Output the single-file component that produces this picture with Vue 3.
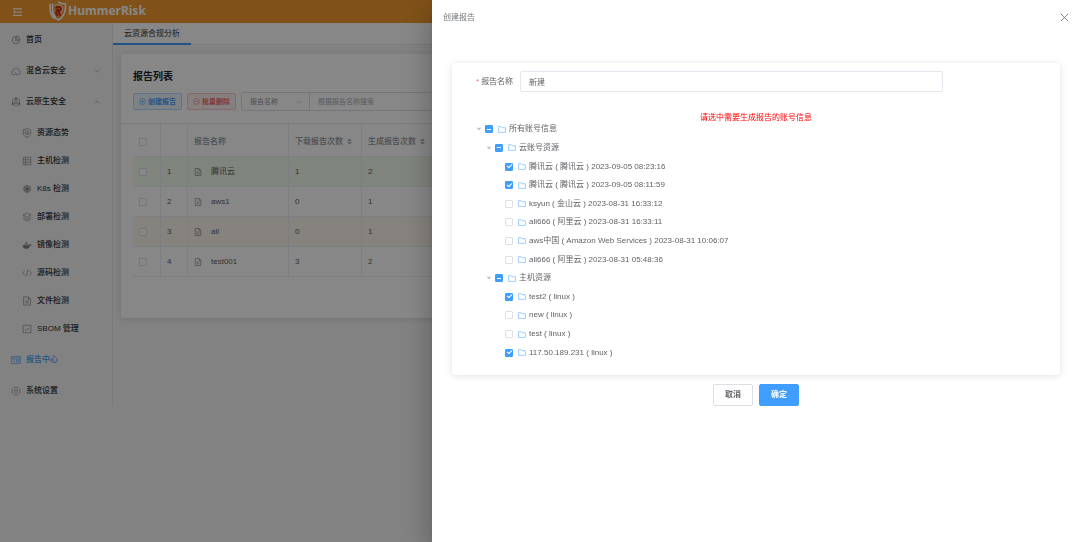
<script setup>
import { ref } from 'vue'

const mainMenu = [
  { icon: 'pie', label: '首页' },
  { icon: 'cloud', label: '混合云安全', arrow: 'down' },
  {
    icon: 'native', label: '云原生安全', arrow: 'up',
    children: [
      { icon: 'shield', label: '资源态势' },
      { icon: 'host', label: '主机检测' },
      { icon: 'k8s', label: 'K8s 检测' },
      { icon: 'layers', label: '部署检测' },
      { icon: 'docker', label: '镜像检测' },
      { icon: 'code', label: '源码检测' },
      { icon: 'file', label: '文件检测' },
      { icon: 'sbom', label: 'SBOM 管理' },
    ],
  },
  { icon: 'report', label: '报告中心', active: true },
  { icon: 'gear', label: '系统设置' },
]

const icons = {
  pie: '<path d="M7 2.2A6 6 0 1 0 13.800 9H7z"/><path d="M9 1.500V7h5.500A6 6 0 0 0 9 1.500z"/>',
  cloud: '<path d="M4 13.500a3.300 3.300 0 0 1-.5-6.500 4.700 4.700 0 0 1 9-.3 3.500 3.500 0 0 1-.5 6.800H4z"/><path d="M6 9.500l2.500 2"/>',
  native: '<path d="M8 1.500l5.500 3.200v6.600L8 14.500l-5.500-3.200V4.700z"/><path d="M8 5l3 5H5z"/><circle cx="8" cy="2.500" r="1.500"/><circle cx="3" cy="11" r="1.500"/><circle cx="13" cy="11" r="1.500"/>',
  shield: '<path d="M8 1l6 2v5c0 3.500-2.500 5.800-6 7-3.500-1.200-6-3.500-6-7V3z"/><circle cx="8" cy="7.500" r="3"/><path d="M6 9.500l2-2.500 2 2.500"/>',
  host: '<path d="M2 2h12v12H2zM2 6h12M2 10h12M6 2v12"/>',
  k8s: '<path fill="currentColor" fill-opacity=".3" d="M8 2l4.500 2.200 1.200 4.900-3.100 4H5.400l-3.100-4 1.200-4.900z"/><circle cx="8" cy="8" r="2"/><path d="M8 3v10M3.500 5.700l9 4.600M12.500 5.700l-9 4.600"/>',
  layers: '<path d="M8 1.500l6.500 3.300L8 8 1.500 4.800zM1.500 8L8 11.200 14.500 8M1.500 11L8 14.300l6.500-3.300"/>',
  docker: '<path fill="currentColor" stroke="none" d="M1 8.500h11c.3-1-.2-2 .6-3 1 .5 1 1.500 1 2 .8-.1 1.500 0 2 .3-.5 1-1.500 1.300-2.600 1.200C11.800 12.500 9.500 14 6.500 14 3 14 1 12 1 8.500z"/><path d="M3 7h7M5 5h4M7.500 3v3"/>',
  code: '<path d="M4.500 4L1 8l3.500 4M11.500 4L15 8l-3.500 4M9.500 2.500l-3 11"/>',
  file: '<path d="M2.500 1.500h7.500l3.500 3.500v9.500h-11zM10 1.500V5h3.500M5 8h6M5 11h6"/>',
  sbom: '<path d="M1.800 2h12.400v12H1.800zM5 8l2.200 2.300L11.200 6"/>',
  report: '<path d="M1 2.500h14v11H1zM1 5h14M3.500 7.500h3M3.500 10.500h3M9 7.500h3.500v3.500H9z"/>',
  gear: '<path d="M5.500 1.800h5L14.500 6v4l-4 4.200h-5L1.500 10V6z"/><circle cx="8" cy="8" r="2.500"/>',
}

const rows = [
  { id: 1, name: '腾讯云', down: 1, made: 2, tone: 'success' },
  { id: 2, name: 'aws1', down: 0, made: 1 },
  { id: 3, name: 'ali', down: 0, made: 1, tone: 'warning' },
  { id: 4, name: 'test001', down: 3, made: 2 },
]

const reportName = ref('新建')
const tree = ref([
  { level: 0, label: '所有账号信息', partial: true },
  { level: 1, label: '云账号资源', partial: true },
  { level: 2, label: '腾讯云 ( 腾讯云 ) 2023-09-05 08:23:16', checked: true },
  { level: 2, label: '腾讯云 ( 腾讯云 ) 2023-09-05 08:11:59', checked: true },
  { level: 2, label: 'ksyun ( 金山云 ) 2023-08-31 16:33:12' },
  { level: 2, label: 'ali666 ( 阿里云 ) 2023-08-31 16:33:11' },
  { level: 2, label: 'aws中国 ( Amazon Web Services ) 2023-08-31 10:06:07' },
  { level: 2, label: 'ali666 ( 阿里云 ) 2023-08-31 05:48:36' },
  { level: 1, label: '主机资源', partial: true },
  { level: 2, label: 'test2 ( linux )', checked: true },
  { level: 2, label: 'new ( linux )' },
  { level: 2, label: 'test ( linux )' },
  { level: 2, label: '117.50.189.231 ( linux )', checked: true },
])
</script>

<template>
  <div class="page">
    <header class="topbar">
      <button class="fold" type="button" aria-label="折叠菜单">
        <svg viewBox="0 0 18 16"><path d="M0 1.500h18M7 8h11M0 14.500h18" stroke="currentColor" stroke-width="2.500" /><path d="M5 4.500v7L0 8z" fill="currentColor" /></svg>
      </button>
      <a class="brand" href="#">
        <svg viewBox="0 0 36 40">
          <path d="M18 2c5 3 10 4 15 4 1 16-3 26-14 32C11 34 7 28 6 20" fill="none" stroke="#fff" stroke-width="3" />
          <path d="M2 6v9c0 10 4 17 10 21M7 5v10c0 8 2 13 6 18" fill="none" stroke="#fff" stroke-width="3" />
          <path d="M11 9c8-3 16-1 16 6 0 4-2 6-5 7l4 8" fill="none" stroke="#fff" stroke-width="2" />
          <path d="M13 13c5-2 11-2 11 3 0 3-2 4-5 5l5 9M14 18c3-2 6-1 5 1-1 2-5 3-5 5l4 6" fill="none" stroke="#c8261c" stroke-width="3.500" />
        </svg>
        <span>HummerRisk</span>
      </a>
    </header>

    <div class="body">
      <nav class="sidebar">
        <template v-for="item in mainMenu" :key="item.label">
          <a class="item" :class="{ active: item.active }" href="#">
            <svg class="icon" viewBox="0 0 16 16" v-html="icons[item.icon]"></svg>
            <span>{{ item.label }}</span>
            <svg v-if="item.arrow" class="arrow" :class="item.arrow" viewBox="0 0 10 10"><path d="M1 3l4 4 4-4" /></svg>
          </a>
          <div v-if="item.children" class="submenu">
            <a v-for="sub in item.children" :key="sub.label" class="item sub" href="#">
              <svg class="icon" viewBox="0 0 16 16" v-html="icons[sub.icon]"></svg>
              <span>{{ sub.label }}</span>
            </a>
          </div>
        </template>
      </nav>

      <main class="content">
        <div class="tabs"><a class="tab" href="#">云资源合规分析</a></div>
        <section class="card">
          <div class="card-head">
            <h1>报告列表</h1>
            <div class="tools">
              <button class="tool primary" type="button">
                <svg viewBox="0 0 12 12"><circle cx="6" cy="6" r="5" /><path d="M3.500 6h5M6 3.500v5" /></svg>创建报告
              </button>
              <button class="tool danger" type="button">
                <svg viewBox="0 0 12 12"><circle cx="6" cy="6" r="5" /><path d="M3.500 6h5" /></svg>批量删除
              </button>
              <div class="search">
                <select aria-label="搜索字段"><option>报告名称</option></select>
                <svg class="caret" viewBox="0 0 10 10"><path d="M1 3l4 4 4-4" /></svg>
                <input type="text" aria-label="搜索" placeholder="根据报告名称搜索">
              </div>
            </div>
          </div>
          <div class="card-body">
            <table>
              <colgroup><col class="c-check"><col class="c-no"><col class="c-name"><col class="c-num"><col class="c-num"><col></colgroup>
              <thead>
                <tr>
                  <th><input class="box" type="checkbox" aria-label="全选"></th>
                  <th></th>
                  <th>报告名称</th>
                  <th v-for="h in ['下载报告次数', '生成报告次数']" :key="h">
                    <span class="sortable">{{ h }}<svg viewBox="0 0 10 14"><path d="M5 1l5 5H0zM5 13l5-5H0z" /></svg></span>
                  </th>
                  <th></th>
                </tr>
              </thead>
              <tbody>
                <tr v-for="r in rows" :key="r.id" :class="r.tone">
                  <td><input class="box" type="checkbox" :aria-label="r.name"></td>
                  <td>{{ r.id }}</td>
                  <td>
                    <span class="name"><svg viewBox="0 0 16 16"><path d="M2.500 1h7.500l3.500 3.500V15h-11zM10 1v3.500h3.500M5 8h6M5 11.500h6" /></svg>{{ r.name }}</span>
                  </td>
                  <td>{{ r.down }}</td>
                  <td>{{ r.made }}</td>
                  <td></td>
                </tr>
              </tbody>
            </table>
          </div>
        </section>
      </main>
    </div>

    <div class="mask">
      <aside class="drawer" role="dialog" aria-labelledby="drawer-title">
        <header class="drawer-head">
          <h2 id="drawer-title">创建报告</h2>
          <button class="close" type="button" aria-label="关闭">
            <svg viewBox="0 0 10 10"><path d="M1 1l8 8M9 1L1 9" /></svg>
          </button>
        </header>
        <form class="panel" @submit.prevent>
          <div class="field">
            <label for="report-name"><i>*</i>报告名称</label>
            <input id="report-name" v-model="reportName" type="text">
          </div>
          <p class="hint">请选中需要生成报告的账号信息</p>
          <ul class="tree">
            <li v-for="(n, i) in tree" :key="i" :class="'level-' + n.level">
              <svg class="toggle" viewBox="0 0 10 10"><path v-if="n.level < 2" d="M1 3h8L5 7.500z" /></svg>
              <label>
                <input v-model="n.checked" class="box" type="checkbox" :indeterminate.prop="!!n.partial">
                <svg class="folder" viewBox="0 0 16 14"><path d="M1.200 1.200h4.800l1.800 2.300h7v9.300H1.200z" /></svg>
                <span>{{ n.label }}</span>
              </label>
            </li>
          </ul>
        </form>
        <div class="actions">
          <button class="btn" type="button">取消</button>
          <button class="btn main" type="button">确定</button>
        </div>
      </aside>
    </div>
  </div>
</template>

<style>
body {
  margin: 0;
  background: #f5f5f5;
}
</style>

<style scoped>
.page {
  min-height: 100vh;
  display: flex;
  flex-direction: column;
  font: 8px/12px "Liberation Sans", "Noto Sans CJK SC", sans-serif;
  color: #606266;
}
.page * {
  box-sizing: border-box;
}
button, input, select {
  font: inherit;
  color: inherit;
  margin: 0;
  padding: 0;
}
a {
  color: inherit;
  text-decoration: none;
}
svg {
  flex: none;
  fill: none;
  stroke: currentColor;
}
.topbar {
  height: 23px;
  display: flex;
  align-items: center;
  background: #f29a2e;
  color: #fff;
}
.fold {
  width: 9px;
  height: 8px;
  margin-left: 13px;
  border: 0;
  background: none;
  display: flex;
}
.fold svg {
  width: 9px;
  height: 8px;
  stroke: none;
}
.brand {
  display: flex;
  align-items: center;
  gap: 1px;
  margin-left: 27px;
  padding-bottom: 2px;
  font: bold 12px/20px "Noto Sans", sans-serif;
}
.brand svg {
  width: 18px;
  height: 20px;
  stroke: none;
}
.body {
  flex: 1;
  display: flex;
}
.sidebar {
  width: 113px;
  flex: none;
  align-self: flex-start;
  padding-top: 1px;
  border-right: 1px solid #e6e6e6;
  color: #303133;
  font-weight: 500;
}
.item {
  height: 31px;
  display: flex;
  align-items: center;
  gap: 5px;
  padding: 0 12px 0 11px;
}
.item.active {
  color: #409eff;
}
.item.sub {
  height: 28px;
  padding-left: 22px;
}
.submenu {
  padding: 2px 0 1px;
}
.icon {
  width: 10px;
  height: 10px;
  color: #808080;
}
.active .icon {
  color: #409eff;
}
.arrow {
  width: 6px;
  height: 6px;
  margin-left: auto;
  color: #909399;
}
.arrow.up {
  transform: rotate(180deg);
}
.content {
  flex: 1;
  min-width: 0;
}
.tabs {
  height: 22px;
  display: flex;
  background: #fff;
  border-bottom: 1px solid #e8e8e8;
}
.tab {
  height: 22px;
  padding: 5px 11px 0;
  border-bottom: 2px solid #409eff;
  color: #303133;
}
.card {
  margin: 9px 8px 0;
  padding-bottom: 41px;
  background: #fff;
  border-radius: 2px;
  box-shadow: 0 1px 7px rgba(0, 0, 0, 0.12);
}
.card-head {
  height: 70px;
  padding: 15px 12px 0;
  border-bottom: 1px solid #e6ebf5;
}
h1 {
  margin: 0 0 7px;
  font-size: 10px;
  line-height: 16px;
  color: #222;
}
.tools {
  display: flex;
  align-items: center;
  gap: 5px;
  font-size: 7px;
}
.tool {
  height: 17px;
  padding: 0 5px;
  display: flex;
  align-items: center;
  gap: 2px;
  font-weight: bold;
  border: 1px solid;
  border-radius: 2px;
}
.tool svg {
  width: 7px;
  height: 7px;
}
.tool.primary {
  color: #409eff;
  background: #ecf5ff;
  border-color: #b3d8ff;
}
.tool.danger {
  color: #f56c6c;
  background: #fef0f0;
  border-color: #fbc4c4;
}
.search {
  position: relative;
  flex: 1;
  display: flex;
  height: 19px;
  border: 1px solid #dcdfe6;
  border-radius: 2px;
  color: #909399;
}
.search select {
  width: 68px;
  padding-left: 8px;
  appearance: none;
  border: 0;
  border-right: 1px solid #dcdfe6;
  background: none;
}
.search input {
  flex: 1;
  min-width: 0;
  padding-left: 8px;
  border: 0;
  background: none;
}
.search input::placeholder {
  color: #a8abb2;
}
.caret {
  position: absolute;
  left: 54px;
  top: 6px;
  width: 6px;
  height: 6px;
  color: #c0c4cc;
}
.card-body {
  padding-left: 12px;
}
table {
  width: 100%;
  table-layout: fixed;
  border-collapse: separate;
  border-spacing: 0;
}
.c-check {
  width: 28px;
}
.c-no {
  width: 27px;
}
.c-name {
  width: 101px;
}
.c-num {
  width: 73px;
}
th, td {
  height: 30px;
  padding: 1px 0 0 6px;
  text-align: left;
  border-right: 1px solid #ebeef5;
  border-bottom: 1px solid #ebeef5;
}
th {
  height: 33px;
  padding-top: 3px;
  color: #909399;
  font-weight: 500;
  white-space: nowrap;
}
.success td {
  background: #f0f9eb;
}
.warning td {
  background: #fdf6ec;
}
.sortable, .name {
  display: flex;
  align-items: center;
}
.sortable svg {
  width: 5px;
  height: 7px;
  margin-left: 4px;
  fill: #a8abb2;
  stroke: none;
}
.name svg {
  width: 8px;
  height: 8px;
  margin-right: 9px;
}
.box {
  appearance: none;
  flex: none;
  width: 8px;
  height: 8px;
  display: grid;
  place-items: center;
  border: 1px solid #dcdfe6;
  border-radius: 1px;
  background: #fff;
}
.box:checked, .box:indeterminate {
  border-color: #409eff;
  background: #409eff;
}
.box:checked::before {
  content: "";
  width: 4px;
  height: 2px;
  margin-bottom: 2px;
  border: solid #fff;
  border-width: 0 0 1px 1px;
  transform: rotate(-45deg);
}
.box:indeterminate::before {
  content: "";
  width: 4px;
  height: 1px;
  margin: 0;
  border: 0;
  background: #fff;
  transform: none;
}
.mask {
  position: fixed;
  inset: 0;
  display: flex;
  justify-content: flex-end;
  background: rgba(0, 0, 0, 0.47);
}
.drawer {
  width: 60%;
  padding: 11px 20px 0;
  background: #fff;
  overflow: auto;
  box-shadow: 0 8px 10px -5px rgba(0, 0, 0, 0.2), 0 16px 24px 2px rgba(0, 0, 0, 0.14), 0 6px 30px 5px rgba(0, 0, 0, 0.12);
}
.drawer-head {
  display: flex;
  align-items: center;
  justify-content: space-between;
  margin: 0 -9px 39px;
  color: #72767b;
}
h2 {
  margin: 0;
  font-size: 8px;
  font-weight: 400;
  line-height: 13px;
}
.close {
  width: 9px;
  height: 9px;
  display: flex;
  border: 0;
  background: none;
}
.close svg {
  width: 9px;
  height: 9px;
}
.panel {
  padding: 8px 24px 13px;
  background: #fff;
  border-radius: 2px;
  box-shadow: 0 1px 7px rgba(0, 0, 0, 0.12);
}
.field {
  display: flex;
  align-items: center;
  margin-right: 93px;
}
.field label {
  width: 44px;
  display: flex;
}
.field i {
  margin-right: 2px;
  color: #f56c6c;
  font-style: normal;
}
.field input {
  flex: 1;
  min-width: 0;
  height: 21px;
  padding: 0 8px;
  border: 1px solid #e4e7ed;
  border-radius: 2px;
}
.hint {
  margin: 22px 0 0;
  line-height: 8px;
  text-align: center;
  color: #f00;
}
.tree {
  margin: -2px 0 0;
  padding: 0;
  min-height: 242px;
  display: grid;
  grid-auto-rows: 1fr;
  list-style: none;
}
.tree li, .tree label {
  display: flex;
  align-items: center;
}
.level-1 {
  padding-left: 10px;
}
.level-2 {
  padding-left: 20px;
}
.toggle {
  width: 6px;
  height: 6px;
  margin-right: 3px;
  fill: #c0c4cc;
  stroke: none;
}
.folder {
  width: 8px;
  height: 7px;
  margin: 0 3px 0 5px;
  color: #409eff;
}
.actions {
  display: flex;
  justify-content: center;
  gap: 6px;
  margin-top: 9px;
}
.btn {
  height: 22px;
  padding: 0 11px;
  border: 1px solid #dcdfe6;
  border-radius: 2px;
  background: #fff;
  font-weight: 700;
}
.btn.main {
  border-color: #409eff;
  background: #409eff;
  color: #fff;
}
</style>
